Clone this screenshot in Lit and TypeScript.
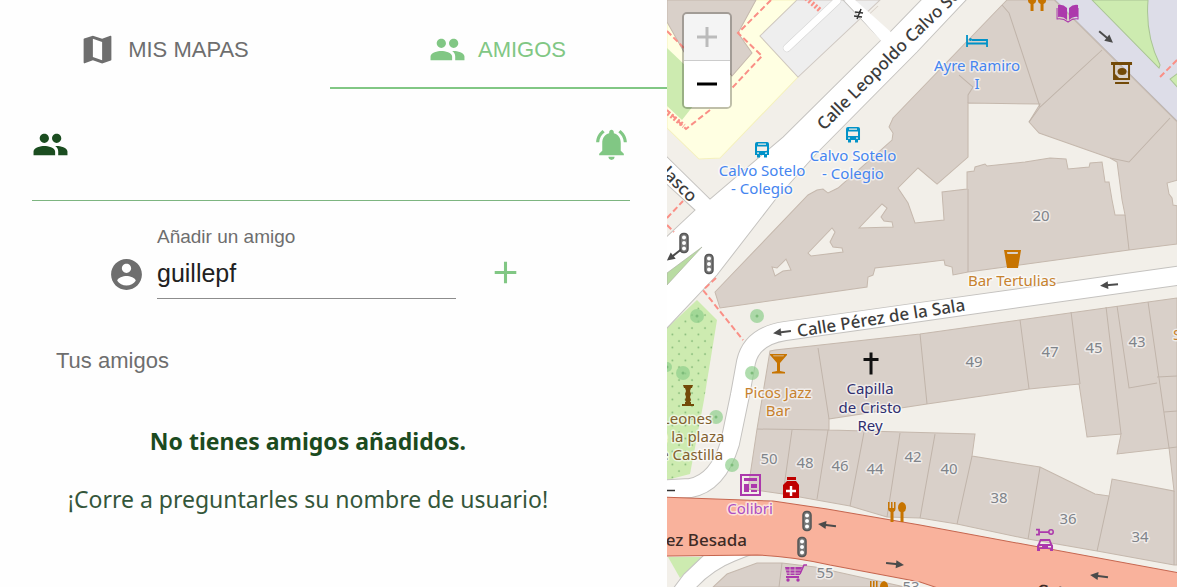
import { LitElement, html, svg, css } from "lit";
import { customElement, state } from "lit/decorators.js";

const GLYPHS: Record<string, string> = {
  map: "M20.5 3l-.16.03L15 5.1 9 3 3.36 4.9c-.21.07-.36.25-.36.48V20.5c0 .28.22.5.5.5l.16-.03L9 18.9l6 2.1 5.64-1.9c.21-.07.36-.25.36-.48V3.5c0-.28-.22-.5-.5-.5zM15 19l-6-2.11V5l6 2.11V19z",
  people:
    "M16 11c1.66 0 2.99-1.34 2.99-3S17.66 5 16 5c-1.66 0-3 1.34-3 3s1.34 3 3 3zm-8 0c1.66 0 2.99-1.34 2.99-3S9.66 5 8 5C6.34 5 5 6.34 5 8s1.34 3 3 3zm0 2c-2.33 0-7 1.17-7 3.5V19h14v-2.5c0-2.33-4.67-3.5-7-3.5zm8 0c-.29 0-.62.02-.97.05 1.16.84 1.97 1.97 1.97 3.45V19h6v-2.5c0-2.33-4.67-3.5-7-3.5z",
  bell: "M7.58 4.08L6.15 2.65C3.75 4.48 2.17 7.3 2.03 10.5h2c.15-2.65 1.51-4.97 3.55-6.42zm12.39 6.42h2c-.15-3.2-1.73-6.02-4.12-7.85l-1.42 1.43c2.02 1.45 3.39 3.77 3.54 6.42zM18 11c0-3.07-1.64-5.64-4.5-6.32V4c0-.83-.67-1.5-1.5-1.5s-1.5.67-1.5 1.5v.68C7.63 5.36 6 7.92 6 11v5l-2 2v1h16v-1l-2-2v-5zm-6 11c.14 0 .27-.01.4-.04.65-.14 1.18-.58 1.44-1.18.1-.24.15-.5.15-.78h-4c.01 1.1.9 2 2.01 2z",
  account:
    "M12 2C6.48 2 2 6.48 2 12s4.48 10 10 10 10-4.48 10-10S17.52 2 12 2zm0 3c1.66 0 3 1.34 3 3s-1.34 3-3 3-3-1.34-3-3 1.34-3 3-3zm0 14.2c-2.5 0-4.71-1.28-6-3.22.03-1.99 4-3.08 6-3.08 1.99 0 5.97 1.09 6 3.08-1.29 1.94-3.5 3.22-6 3.22z",
  add: "M19 13h-6v6h-2v-6H5v-2h6V5h2v6h6v2z",
};

const icon = (name: string) =>
  html`<svg class="icon" viewBox="0 0 24 24" aria-hidden="true"><path d=${GLYPHS[name]}></path></svg>`;

/* ---------- Map geometry ---------- */

const BUILDINGS = [
  "667,0 756,0 738,33 752,53 732,76 712,52 684,52 667,22",
  "1007,0 1054,0 1177,122 1177,244 1129,250 968,272 953,275 952,267 945,265 944,260 920,263 875,268 873,275 868,277 867,287 720,308 715,292 808,195 817,190 823,189 828,193 838,188 892,140 893,133 889,127 893,118 1002,5",
  "770,351 775,350 920,334 1148,302 1177,298 1177,565 1174,565 1097,551 1028,539 957,524 920,518 887,517 850,506 783,494 748,489 757,429",
  "713,587 727,574 757,563 782,563 815,567 905,587",
];

const YARDS = [
  "937,184 968,157 968,103 1040,104 1029,122 1039,133 1110,158 1117,162 1122,200 1125,215 1115,215 1112,200 1109,182 1105,182 1102,162 1090,163 1089,167 1068,169 1066,159 1050,158 1025,162 987,166 985,164 975,167 974,171 967,172 967,189 942,192 944,220 915,223 908,203 898,188 918,168",
  "859,228 882,204 887,208 881,217 884,221 892,222 893,227",
  "808,253 832,228 835,232 830,242 833,247 842,248 843,252 811,256",
  "772,267 777,268 786,259 791,270 783,271 775,276",
  "1178,180 1167,183 1169,194 1172,198 1173,205 1178,206",
  "829,419 829,430 975,434 972,456 1040,467 1095,494 1109,496 1112,479 1174,491 1169,448 1117,454 1121,434 1087,437 1079,384 1029,389 927,404",
];

const WALLS = [
  "M1002 5L1009 13L1040 107L1029 122M1040 107L1102 50M1110 158L1129 162L1170 118",
  "M959 75L973 87L968 95V103M968 189V272M1125 215L1129 250",
  "M818 348L829 419M757 429L829 430M792 430L783 494M828 430L817 499M864 432L850 506M900 433L887 517",
  "M935 434L920 518M972 456L957 524M1040 467L1028 539M1109 496L1097 551M1174 491V565",
  "M920 334L927 404M1020 320L1029 389M1071 312L1080 384M1106 307L1121 434M1117 306L1129 388L1157 383M1148 302L1169 448M1157 377L1177 376M1164 412L1177 411M1169 448L1177 447",
  "M782 563L779 587",
];

type Label = [number, number, string, string];

const LABELS: Label[] = [
  [762, 176, "Calvo Sotelo", "blue"],
  [762, 194, "- Colegio", "blue"],
  [853, 161, "Calvo Sotelo", "blue"],
  [853, 179, "- Colegio", "blue"],
  [977, 71, "Ayre Ramiro", "blue"],
  [977, 89, "I", "blue"],
  [1012, 286, "Bar Tertulias", "amber"],
  [778, 398, "Picos Jazz", "amber"],
  [778, 416, "Bar", "amber"],
  [870, 394, "Capilla", "navy"],
  [870, 413, "de Cristo", "navy"],
  [870, 431, "Rey", "navy"],
  [750, 514, "Colibri", "violet"],
  [687, 424, "Leones", "brown"],
  [687, 442, "de la plaza", "brown"],
  [687, 460, "de Castilla", "brown"],
  [1041, 221, "20", "number"],
  [974, 367, "49", "number"],
  [1050, 357, "47", "number"],
  [1094, 353, "45", "number"],
  [1137, 347, "43", "number"],
  [769, 464, "50", "number"],
  [805, 468, "48", "number"],
  [840, 471, "46", "number"],
  [875, 474, "44", "number"],
  [913, 462, "42", "number"],
  [949, 474, "40", "number"],
  [999, 503, "38", "number"],
  [1068, 524, "36", "number"],
  [1140, 542, "34", "number"],
  [825, 578, "55", "number"],
  [911, 592, "53", "number"],
  [1177, 340, "S", "amber"],
];

const TREES = [
  [697, 316, 7],
  [757, 316, 7],
  [683, 373, 7],
  [752, 373, 7],
  [716, 417, 7],
  [732, 465, 7],
  [667, 367, 5],
];

const ARROWS = [
  [782, 332, 173],
  [1109, 285, 175],
  [1106, 37, 40],
  [827, 525, 187],
  [895, 564, 6],
  [1099, 576, 187],
  [674, 255, 142],
];

const LIGHTS = [
  [684, 243],
  [709, 264],
  [807, 521],
  [802, 547],
];

const bus = (x: number, y: number) => svg`<g transform="translate(${x} ${y})">
  <path fill="#0092c8" fill-rule="evenodd" d="M-5-8h10q2 0 2 2V5H5v2.500H2V5h-4v2.500h-3V5h-2V-6q0-2 2-2zM-4-6.500v1.200h8v-1.200zM-5-3.500v4.500H5v-4.500zM-5 2.500v1.300h2v-1.300zM3 2.500v1.300h2v-1.300z"></path></g>`;

const fork = (x: number, y: number) => svg`<g transform="translate(${x} ${y})" fill="#c77400">
  <path d="M-9-10h1.500v6h1.500v-6h1.500v6H-3v-6h1.500v7q0 2-2 3V10h-3V0q-2.500-1-2.500-3z"></path>
  <path d="M5-10q4 1 4 5.500Q9-1 6.500 0V10h-3V0Q1-1 1-4.500 1-9 5-10z"></path></g>`;

@customElement("street-map")
export class StreetMap extends LitElement {
  static styles = css`
    :host {
      display: block;
      position: relative;
      overflow: hidden;
      background: #f2efe9;
      font-family: "Noto Sans", "Open Sans", sans-serif;
    }
    .canvas {
      display: block;
      width: 100%;
      height: 100%;
    }
    .building { fill: #d9d0c9; stroke: #c5b8ad; stroke-width: 1; }
    .yard { fill: #f2efe9; stroke: #c5b8ad; stroke-width: 1; }
    .wall { fill: none; stroke: #c0b4aa; stroke-width: 1; }
    .road { fill: #ffffff; stroke: #c4c2bf; stroke-width: 1; }
    .lane { fill: none; stroke-linecap: round; stroke-linejoin: round; }
    .path { fill: none; stroke: #fa8f86; stroke-width: 2; stroke-dasharray: 6 3; }
    .tree { fill: #8fce8b; fill-opacity: 0.7; }
    .arrow { fill: none; stroke: #4b4b4b; stroke-width: 2; }
    .label {
      font-size: 15px;
      text-anchor: middle;
      paint-order: stroke;
      stroke: rgba(255, 255, 255, 0.6);
      stroke-width: 3;
      stroke-linejoin: round;
    }
    .blue { fill: #4585f0; }
    .amber { fill: #c7822e; }
    .navy { fill: #2f2f70; }
    .violet { fill: #ad4fc4; }
    .brown { fill: #82602f; }
    .number { fill: #80848a; }
    .street {
      font-size: 17px;
      font-weight: 500;
      fill: #3c3c3c;
      paint-order: stroke;
      stroke: rgba(255, 255, 255, 0.7);
      stroke-width: 2;
    }
    .avenue { stroke: none; fill: #3d2b26; }
    .zoom {
      position: absolute;
      top: 12px;
      left: 15px;
      display: grid;
      border: 2px solid rgba(0, 0, 0, 0.25);
      border-radius: 5px;
      background-clip: padding-box;
    }
    .zoom-button {
      display: grid;
      place-items: center;
      width: 46px;
      height: 46px;
      padding: 0;
      border: 0;
      background: #ffffff;
      color: #000000;
      cursor: pointer;
    }
    .zoom-button:first-child {
      height: 47px;
      border-bottom: 1px solid #cccccc;
      border-radius: 3px 3px 0 0;
    }
    .zoom-button:last-child { border-radius: 0 0 3px 3px; }
    .zoom-button:disabled { background: #f4f4f4; color: #bbbbbb; cursor: default; }
    .zoom-sign { width: 20px; height: 20px; fill: none; stroke: currentColor; stroke-width: 3; }
  `;

  render() {
    return html`
      <svg class="canvas" viewBox="667 0 510 587" preserveAspectRatio="xMinYMin slice" role="img" aria-label="Mapa">
        <defs>
          <pattern id="dots" width="13" height="13" patternUnits="userSpaceOnUse">
            <circle cx="3" cy="3" r="0.9" fill="#7fb573"></circle>
            <circle cx="9.5" cy="9.5" r="0.9" fill="#7fb573"></circle>
          </pattern>
          <path id="calvo" d="M824 131L908 47L978 -20"></path>
        </defs>
        ${this.ground()} ${this.roads()} ${this.places()} ${this.texts()}
      </svg>
      <div class="zoom">
        <button class="zoom-button" type="button" aria-label="Acercar" disabled>
          <svg class="zoom-sign" viewBox="0 0 20 20"><path d="M0 10H20M10 0V20"></path></svg>
        </button>
        <button class="zoom-button" type="button" aria-label="Alejar">
          <svg class="zoom-sign" viewBox="0 0 20 20"><path d="M0 10H20"></path></svg>
        </button>
      </div>
    `;
  }

  private ground() {
    return svg`
      <polygon fill="#ffffe2" stroke="#f5f1bd" points="667,0 797,0 760,36 798,77 720,158 699,159 667,128"></polygon>
      <polygon fill="#cdebb0" points="667,48 708,87 682,120 667,106"></polygon>
      <polygon fill="#eeeeee" stroke="#cfc8c2" points="797,0 760,36 798,77 880,0"></polygon>
      <path fill="none" stroke="#d8d0c8" d="M863 20L878 6"></path>
      <polygon fill="#dddde8" stroke="#b9b4b4" points="1054,-1 1178,-1 1178,122"></polygon>
      <path fill="#cdebb0" stroke="#a9c494" d="M1092 0L1159 68L1160 65Q1145 35 1148 0zM1178 73L1170 79L1178 88z"></path>
      <polygon fill="#cdebb0" points="667,328 697,300 717,320 704,400 690,474 667,480"></polygon>
      <polygon fill="url(#dots)" points="667,328 697,306 716,322 704,400 690,474 667,480"></polygon>
      <polygon fill="#cdebb0" points="668,557 704,557 680,578"></polygon>
      ${BUILDINGS.map((p) => svg`<polygon class="building" points=${p}></polygon>`)}
      ${YARDS.map((p) => svg`<polygon class="yard" points=${p}></polygon>`)}
      ${WALLS.map((d) => svg`<path class="wall" d=${d}></path>`)}
    `;
  }

  private roads() {
    const sala =
      "M1190 274L920 312L785 331Q752 336 746 362L740 395L730 443Q718 483 690 488L655 490";
    return svg`
      <path class="road" d="M843 0L881 40L783 137L710 199L660 150V178L695 210L660 243V335L667 328L717 275L775 200L817 153L917 52L967 -1H922L887 35L853 -1z"></path>
      <path fill="#ffffff" d="M844 -1L882 42L892 33L854 -1z"></path>
      <polygon fill="#b9dca2" stroke="#aeb3a4" stroke-width="0.7" points="667,285 702,247 667,273"></polygon>
      <path class="lane" stroke="#c4c2bf" stroke-width="20" d=${sala}></path>
      <path class="lane" stroke="#ffffff" stroke-width="18" d=${sala}></path>
      <path class="lane" stroke="#d5d5d5" stroke-width="8" d="M787 48L837 1"></path>
      <path class="lane" stroke="#ffffff" stroke-width="7" d="M787 48L837 1"></path>
      <path class="road" d="M672 590L684 574L706 553H755L735 561Q712 570 694 590z"></path>
      <path fill="#f9b29c" stroke="#c6664f" d="M660 497L773 501L827 509L920 525L1180 573V592H950L920 582L830 565Q790 556 757 555L660 556z"></path>
      <g class="path">
        <path d="M771 0L738 33L762 56L732 88M667 31L684 48M710 110L686 129L667 110"></path>
        <path d="M806 -2L821 11" stroke-width="5" stroke-dasharray="2 2"></path>
        <path d="M668 113L684 126" stroke-width="5" stroke-dasharray="2 2"></path>
        <path d="M716 278L703 290L743 340M1160 77L1177 60M667 218L683 201M667 225L674 232"></path>
      </g>
    `;
  }

  private places() {
    return svg`
      ${TREES.map(([x, y, r]) => svg`<circle class="tree" cx=${x} cy=${y} r=${r}></circle>
        <circle cx=${x} cy=${y} r="1.500" fill="#7dbb7a"></circle>`)}
      ${LIGHTS.map(([x, y]) => svg`<g transform="translate(${x} ${y})" fill="#ffffff" stroke="#555555" stroke-width="1.500">
        <rect x="-4" y="-9.500" width="8" height="19" rx="3.500" fill="#777777"></rect>
        <circle cy="-5.500" r="2" stroke="none"></circle><circle r="2" stroke="none"></circle><circle cy="5.500" r="2" stroke="none"></circle></g>`)}
      ${ARROWS.map(([x, y, a]) => svg`<g transform="translate(${x} ${y}) rotate(${a})">
        <path class="arrow" d="M-9 0H3"></path><path fill="#4b4b4b" d="M9 0L1 4V-4z"></path></g>`)}
      ${bus(762, 150)} ${bus(853, 135)} ${fork(897, 512)} ${fork(879, 591)}
      <path stroke="#0092c8" stroke-width="1.800" fill="none" d="M967 35V47M987 39V47M967 43.500H987M972 40H987"></path>
      <circle cx="970.500" cy="39.500" r="1.500" fill="#0092c8"></circle>
      <g fill="#ac39ac">
        <path d="M1058 5Q1063 4 1067 8V20Q1063 16 1058 17zM1078 5Q1073 4 1069 8V20Q1073 16 1078 17z"></path>
        <path fill="none" stroke="#ac39ac" d="M1057 8V19Q1063 18 1068 22Q1073 18 1078 19V8"></path>
        <path fill-rule="evenodd" d="M740 474h21v22h-21zM742 476v18h17v-18zM744 478h13v3h-13zM744 484h5v8h-5zM751 484h6v4h-6zM751 490h6v2h-6z"></path>
        <path fill-rule="evenodd" d="M1040 539h10l2 5q1 1 1 2v5h-3v-2h-10v2h-3v-5q0-1 1-2zM1041 541l-1 3h10l-1-3zM1039 546v1.500h3V546zM1048 546v1.500h3V546z"></path>
        <path fill="none" stroke="#ac39ac" stroke-width="1.800" d="M1036 529.500h3v5h-3M1040 532h9"></path>
        <circle cx="1051" cy="532" r="2.200" fill="none" stroke="#ac39ac" stroke-width="1.500"></circle>
        <path d="M785 567h17l-2 8h-13zM786 576h13v2h-13z"></path>
        <path fill="none" stroke="#ac39ac" stroke-width="1.500" d="M800 574L804 565H807"></path>
        <circle cx="788" cy="580" r="1.700"></circle><circle cx="798" cy="580" r="1.700"></circle>
        <path stroke="#d9d0c9" stroke-width="0.800" d="M786 570H801M786 573H800M790 567V575M795 567V575"></path>
      </g>
      <g fill="#c77400">
        <path fill-rule="evenodd" d="M1004 250h17l-3 18h-11zM1007 252l.3 2h10.400l.3-2z"></path>
        <path fill-rule="evenodd" d="M770 354h17v1l-7 8v8l5 1v1.500h-13V372l5-1v-8l-7-8zM773 355.500l.5.800h10l.5-.8z"></path>
        <path d="M1028-4h8v5q0 2-2.500 3v7h-3v-7q-2.500-1-2.500-3zM1038-4h8v5q0 2-2.500 3v7h-3v-7q-2.500-1-2.500-3z"></path>
      </g>
      <path stroke="#111111" stroke-width="3" d="M871 352.500V374.500M863.500 359.500H878.500"></path>
      <path fill="#bf0000" d="M787 477h9v3h-9zM787 481h9l3 4v13h-16v-13z"></path>
      <path stroke="#ffffff" stroke-width="2.400" d="M791 486V496M786 491H796"></path>
      <g fill="#734a08">
        <path fill-rule="evenodd" d="M1111 62h21v3h-2v15h-17V65h-2zM1115 65v9l4 4h9V65z"></path>
        <ellipse cx="1122" cy="71.500" rx="4.500" ry="3.500"></ellipse>
        <path d="M1115 82h14v2h-14z"></path>
        <path d="M683 385h10l-1 3h-1l-1 3 1 3-1 3 1 3-1 2h1v2h3v2h-12v-2h3v-2h1l-1-2 1-3-1-3 1-3-1-3h-1z"></path>
      </g>
      <path stroke="#333333" stroke-width="1.500" d="M855 12L863 13M854 16L862 17M861 9L857 19M667 490.500H675"></path>
    `;
  }

  private texts() {
    return svg`
      ${LABELS.map(([x, y, t, c]) => svg`<text class="label ${c}" x=${x} y=${y}>${t}</text>`)}
      <text class="street"><textPath href="#calvo">Calle Leopoldo Calvo Sotelo</textPath></text>
      <text class="street" transform="translate(798 337) rotate(-9)">Calle Pérez de la Sala</text>
      <text class="street" text-anchor="end" transform="translate(690 203) rotate(45)">Velasco</text>
      <text class="street avenue" text-anchor="end" x="747" y="546">González Besada</text>
      <text class="street avenue" transform="translate(1036 596) rotate(8)">Calle González Besada</text>
    `;
  }
}

@customElement("app-root")
export class AppRoot extends LitElement {
  @state() private friend = "guillepf";

  static styles = css`
    :host {
      display: grid;
      grid-template-columns: 17fr 13fr;
      min-height: 100vh;
      background: #fefefe;
      font-family: "Liberation Sans", Arial, sans-serif;
      color: #6e6e6e;
    }
    .icon {
      display: block;
      flex: none;
      width: 37px;
      height: 37px;
      fill: currentColor;
    }
    .tabs {
      display: grid;
      grid-template-columns: 330fr 337fr;
    }
    .tab {
      display: flex;
      align-items: center;
      justify-content: center;
      gap: 12px;
      height: 89px;
      padding: 12px 2px 0 0;
      border: 0;
      border-bottom: 2px solid transparent;
      background: none;
      color: inherit;
      font: inherit;
      font-size: 22px;
      line-height: 24px;
      cursor: pointer;
    }
    .active {
      border-color: #81c784;
      color: #81c784;
    }
    .content { padding: 0 37px 0 32px; }
    .toolbar {
      display: flex;
      align-items: center;
      justify-content: space-between;
      height: 111px;
      border-bottom: 1px solid #7db580;
      color: #1b4d20;
    }
    .icon-button {
      padding: 0;
      border: 0;
      background: none;
      color: #81c784;
      cursor: pointer;
    }
    .add-row {
      display: grid;
      grid-template-columns: 37px 1fr 37px;
      align-items: center;
      column-gap: 12px;
      padding: 25px 106px 0 76px;
    }
    .field {
      display: grid;
      margin-right: 19px;
      border-bottom: 1px solid #8c8c8c;
    }
    .field-label {
      font-size: 19px;
      line-height: 22px;
    }
    .field-input {
      min-width: 0;
      height: 50px;
      padding: 0;
      border: 0;
      outline: 0;
      background: none;
      color: #212121;
      font: inherit;
      font-size: 25px;
    }
    .lead { padding-top: 24px; }
    .subtitle {
      margin: 0;
      padding: 49px 24px 0;
      font-size: 22px;
      font-weight: 400;
      line-height: 26px;
    }
    .empty {
      padding: 50px 46px 0 0;
      color: #34563a;
      font-family: "Noto Sans", "Open Sans", sans-serif;
      font-size: 23px;
      line-height: 34px;
      text-align: center;
    }
    .empty-line { margin: 0 0 24px; }
    .strong {
      color: #1b4a20;
      font-weight: 700;
    }
  `;

  render() {
    return html`
      <main>
        <div class="tabs" role="tablist">
          <button class="tab" type="button" role="tab" aria-selected="false">${icon("map")}<span>MIS MAPAS</span></button>
          <button class="tab active" type="button" role="tab" aria-selected="true">${icon("people")}<span>AMIGOS</span></button>
        </div>
        <section class="content">
          <div class="toolbar">
            ${icon("people")}
            <button class="icon-button" type="button" aria-label="Notificaciones">${icon("bell")}</button>
          </div>
          <div class="add-row">
            <div class="lead">${icon("account")}</div>
            <div class="field">
              <label class="field-label" for="friend">Añadir un amigo</label>
              <input
                class="field-input"
                id="friend"
                type="text"
                .value=${this.friend}
                @input=${(e: Event) => (this.friend = (e.target as HTMLInputElement).value)}
              />
            </div>
            <div class="lead">
              <button class="icon-button" type="button" aria-label="Añadir">${icon("add")}</button>
            </div>
          </div>
          <h2 class="subtitle">Tus amigos</h2>
          <div class="empty">
            <p class="empty-line strong">No tienes amigos añadidos.</p>
            <p class="empty-line">¡Corre a preguntarles su nombre de usuario!</p>
          </div>
        </section>
      </main>
      <street-map></street-map>
    `;
  }
}
